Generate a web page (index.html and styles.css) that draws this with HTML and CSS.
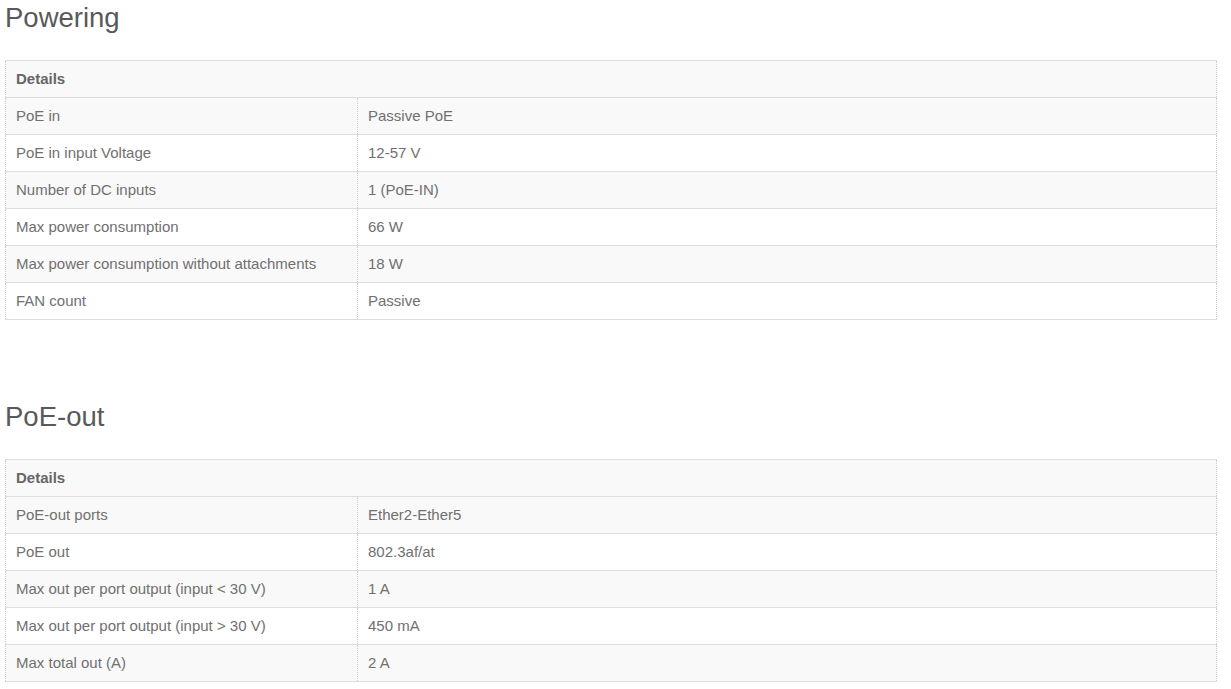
FILE: index.html
```html
<!DOCTYPE html>
<html>
<head>
<meta charset="utf-8">
<link rel="stylesheet" href="styles.css">
</head>
<body>
<div class="page">
  <section class="spec">
    <h2 class="spec-title">Powering</h2>
    <table class="spec-table">
      <tr><th colspan="2">Details</th></tr>
      <tr><td class="k">PoE in</td><td>Passive PoE</td></tr>
      <tr><td class="k">PoE in input Voltage</td><td>12-57 V</td></tr>
      <tr><td class="k">Number of DC inputs</td><td>1 (PoE-IN)</td></tr>
      <tr><td class="k">Max power consumption</td><td>66 W</td></tr>
      <tr><td class="k">Max power consumption without attachments</td><td>18 W</td></tr>
      <tr><td class="k">FAN count</td><td>Passive</td></tr>
    </table>
  </section>
  <section class="spec">
    <h2 class="spec-title">PoE-out</h2>
    <table class="spec-table">
      <tr><th colspan="2">Details</th></tr>
      <tr><td class="k">PoE-out ports</td><td>Ether2-Ether5</td></tr>
      <tr><td class="k">PoE out</td><td>802.3af/at</td></tr>
      <tr><td class="k">Max out per port output (input &lt; 30 V)</td><td>1 A</td></tr>
      <tr><td class="k">Max out per port output (input &gt; 30 V)</td><td>450 mA</td></tr>
      <tr><td class="k">Max total out (A)</td><td>2 A</td></tr>
    </table>
  </section>
</div>
</body>
</html>
```

FILE: styles.css
```css
html, body {
  margin: 0;
  padding: 0;
  background: #fff;
}
body {
  font-family: "Liberation Sans", Arial, sans-serif;
  color: #707070;
}
.page {
  width: 1212px;
  margin-left: 5px;
}
.spec {
  margin-bottom: 79px;
}
.spec-title {
  margin: 0 0 24px 0;
  font-size: 27.5px;
  line-height: 36px;
  font-weight: normal;
  color: #595959;
}
.spec-table {
  width: 100%;
  border-collapse: collapse;
  font-size: 15px;
  line-height: 20px;
}
.spec-table th,
.spec-table td {
  border-left: 1px dotted #ccc;
  border-right: 1px dotted #ccc;
  border-top: 1px solid #ddd;
  border-bottom: 1px solid #ddd;
  padding: 8px 10px;
  text-align: left;
  vertical-align: top;
}
.spec-table th {
  font-weight: bold;
  background: #f9f9f9;
  color: #666;
}
.spec-table td.k {
  width: 331px;
}
.spec-table tr:nth-child(even) td {
  background: #f9f9f9;
}
.spec-table tr:nth-child(odd) td {
  background: #fff;
}
```
